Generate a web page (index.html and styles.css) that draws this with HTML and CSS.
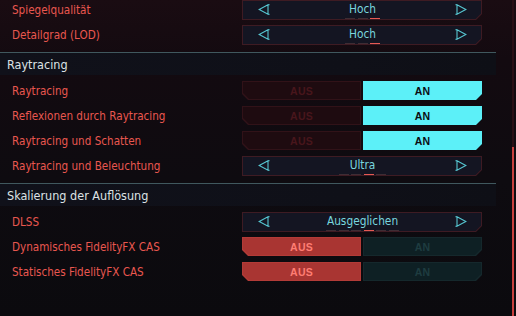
FILE: index.html
```html
<!DOCTYPE html>
<html lang="de">
<head>
<meta charset="utf-8">
<link rel="stylesheet" href="styles.css">
</head>
<body>
<div class="screen">
  <div class="content">
    <div class="group">
      <div class="row">
        <span class="label">Spiegelqualität</span>
        <div class="sel"><div class="sel-in">
          <svg class="arrow" viewBox="0 0 12 11"><path d="M10 0.8 L1.2 5.5 L10 10.2 Z M10 0.8 H11.6 M10 10.2 H11.6"/></svg>
          <div class="val"><span class="val-text">Hoch</span><div class="dashes"><i></i><i></i><i class="on"></i></div></div>
          <svg class="arrow" viewBox="0 0 12 11"><path d="M2 0.8 L10.8 5.5 L2 10.2 Z M2 0.8 H0.4 M2 10.2 H0.4"/></svg>
        </div></div>
      </div>
      <div class="row">
        <span class="label">Detailgrad (LOD)</span>
        <div class="sel"><div class="sel-in">
          <svg class="arrow" viewBox="0 0 12 11"><path d="M10 0.8 L1.2 5.5 L10 10.2 Z M10 0.8 H11.6 M10 10.2 H11.6"/></svg>
          <div class="val"><span class="val-text">Hoch</span><div class="dashes"><i></i><i></i><i class="on"></i></div></div>
          <svg class="arrow" viewBox="0 0 12 11"><path d="M2 0.8 L10.8 5.5 L2 10.2 Z M2 0.8 H0.4 M2 10.2 H0.4"/></svg>
        </div></div>
      </div>
    </div>

    <div class="section"><div class="section-title">Raytracing</div></div>

    <div class="group">
      <div class="row">
        <span class="label">Raytracing</span>
        <div class="toggle">
          <div class="half left off-red"><div class="half-in">AUS</div></div>
          <div class="half right on-cyan"><div class="half-in">AN</div></div>
        </div>
      </div>
      <div class="row">
        <span class="label">Reflexionen durch Raytracing</span>
        <div class="toggle">
          <div class="half left off-red"><div class="half-in">AUS</div></div>
          <div class="half right on-cyan"><div class="half-in">AN</div></div>
        </div>
      </div>
      <div class="row">
        <span class="label">Raytracing und Schatten</span>
        <div class="toggle">
          <div class="half left off-red"><div class="half-in">AUS</div></div>
          <div class="half right on-cyan"><div class="half-in">AN</div></div>
        </div>
      </div>
      <div class="row">
        <span class="label">Raytracing und Beleuchtung</span>
        <div class="sel"><div class="sel-in">
          <svg class="arrow" viewBox="0 0 12 11"><path d="M10 0.8 L1.2 5.5 L10 10.2 Z M10 0.8 H11.6 M10 10.2 H11.6"/></svg>
          <div class="val"><span class="val-text">Ultra</span><div class="dashes"><i></i><i></i><i class="on"></i><i></i></div></div>
          <svg class="arrow" viewBox="0 0 12 11"><path d="M2 0.8 L10.8 5.5 L2 10.2 Z M2 0.8 H0.4 M2 10.2 H0.4"/></svg>
        </div></div>
      </div>
    </div>

    <div class="section"><div class="section-title">Skalierung der Auflösung</div></div>

    <div class="group">
      <div class="row">
        <span class="label">DLSS</span>
        <div class="sel"><div class="sel-in">
          <svg class="arrow" viewBox="0 0 12 11"><path d="M10 0.8 L1.2 5.5 L10 10.2 Z M10 0.8 H11.6 M10 10.2 H11.6"/></svg>
          <div class="val"><span class="val-text">Ausgeglichen</span><div class="dashes"><i></i><i></i><i></i><i class="on"></i><i></i><i></i></div></div>
          <svg class="arrow" viewBox="0 0 12 11"><path d="M2 0.8 L10.8 5.5 L2 10.2 Z M2 0.8 H0.4 M2 10.2 H0.4"/></svg>
        </div></div>
      </div>
      <div class="row">
        <span class="label">Dynamisches FidelityFX CAS</span>
        <div class="toggle">
          <div class="half left on-red"><div class="half-in">AUS</div></div>
          <div class="half right off-teal"><div class="half-in">AN</div></div>
        </div>
      </div>
      <div class="row">
        <span class="label">Statisches FidelityFX CAS</span>
        <div class="toggle">
          <div class="half left on-red"><div class="half-in">AUS</div></div>
          <div class="half right off-teal"><div class="half-in">AN</div></div>
        </div>
      </div>
    </div>
  </div>
  <div class="scroll"><div class="track"><div class="track-top"></div><div class="thumb"></div></div></div>
</div>
</body>
</html>
```

FILE: styles.css
```css
html, body {
  margin: 0;
  padding: 0;
  background: #0c0a0f;
}
.screen {
  width: 516px;
  height: 316px;
  overflow: hidden;
  display: flex;
  background: linear-gradient(180deg, #1a0c12 0px, #130a10 60px, #0e0b10 180px, #0b0a0e 316px);
  font-family: "Liberation Sans Narrow", "DejaVu Sans Condensed", sans-serif;
}
.content {
  width: 496px;
  flex: none;
  display: flex;
  flex-direction: column;
}
.group {
  display: flex;
  flex-direction: column;
  gap: 5px;
}
.row {
  height: 20px;
  display: flex;
  align-items: center;
  padding-right: 14px;
}
.label {
  flex: 1;
  padding-left: 12px;
  padding-bottom: 1px;
  color: #e9574f;
  font-size: 11.6px;
}
.section {
  margin-top: 7px;
  margin-bottom: 6px;
  border-top: 1px solid #40585e;
  height: 22px;
  background: linear-gradient(90deg, #10111a, #0f1018 70%, #0e0f16);
  display: flex;
  align-items: center;
}
.section-title {
  padding-left: 7px;
  color: #dde2e5;
  font-size: 12.5px;
}

/* selector */
.sel {
  width: 240px;
  height: 20px;
  box-sizing: border-box;
  padding: 1px;
  background: #3e1b23;
  clip-path: polygon(0 0, 100% 0, 100% calc(100% - 6px), calc(100% - 6px) 100%, 0 100%);
}
.sel-in {
  height: 100%;
  background: #141522;
  clip-path: polygon(0 0, 100% 0, 100% calc(100% - 5.5px), calc(100% - 5.5px) 100%, 0 100%);
  display: flex;
  align-items: center;
  padding: 0 14px 0 15px;
}
.arrow {
  width: 12px;
  height: 11px;
  flex: none;
  fill: none;
  stroke: #56c6d1;
  stroke-width: 1.1;
  margin-top: -1px;
}
.val {
  flex: 1;
  display: flex;
  flex-direction: column;
  align-items: center;
  padding-top: 3px;
}
.val-text {
  color: #79d6df;
  font-size: 11.8px;
  line-height: 13px;
}
.dashes {
  display: flex;
  gap: 2.5px;
  margin-top: 2px;
}
.dashes i {
  display: block;
  width: 10px;
  height: 1px;
  background: #3f2d34;
}
.dashes i.on {
  background: #e55a54;
  height: 1.5px;
}

/* toggle */
.toggle {
  width: 240px;
  height: 20px;
  display: flex;
  gap: 2px;
}
.half {
  flex: 1;
  padding: 1px;
  box-sizing: border-box;
  height: 19px;
}
.half-in {
  height: 100%;
  display: flex;
  align-items: center;
  justify-content: center;
  font-family: "Liberation Sans", "DejaVu Sans", sans-serif;
  font-weight: bold;
  font-size: 10.5px;
  letter-spacing: 0.2px;
}
.half.left, .half.left .half-in {
  clip-path: polygon(0 0, 100% 0, 100% 100%, 6px 100%, 0 calc(100% - 6px));
}
.half.right, .half.right .half-in {
  clip-path: polygon(0 0, 100% 0, 100% calc(100% - 6px), calc(100% - 6px) 100%, 0 100%);
}
.off-red { background: #311218; }
.off-red .half-in { background: #1e0b10; color: #48161c; }
.on-cyan { background: #5cf0f8; }
.on-cyan .half-in { background: #5cf0f8; color: #0b0d12; }
.on-red { background: #b33b37; }
.on-red .half-in { background: #a93532; color: #ff7d73; }
.off-teal { background: #15282c; }
.off-teal .half-in { background: #0e2024; color: #1e3c40; }

/* scrollbar */
.scroll {
  flex: 1;
  display: flex;
  justify-content: flex-end;
  padding-right: 2px;
}
.track {
  width: 2px;
  display: flex;
  flex-direction: column;
}
.track-top {
  flex: 0 0 147px;
  background: #2a1016;
}
.thumb {
  flex: 1;
  background: #c8403e;
}
```
